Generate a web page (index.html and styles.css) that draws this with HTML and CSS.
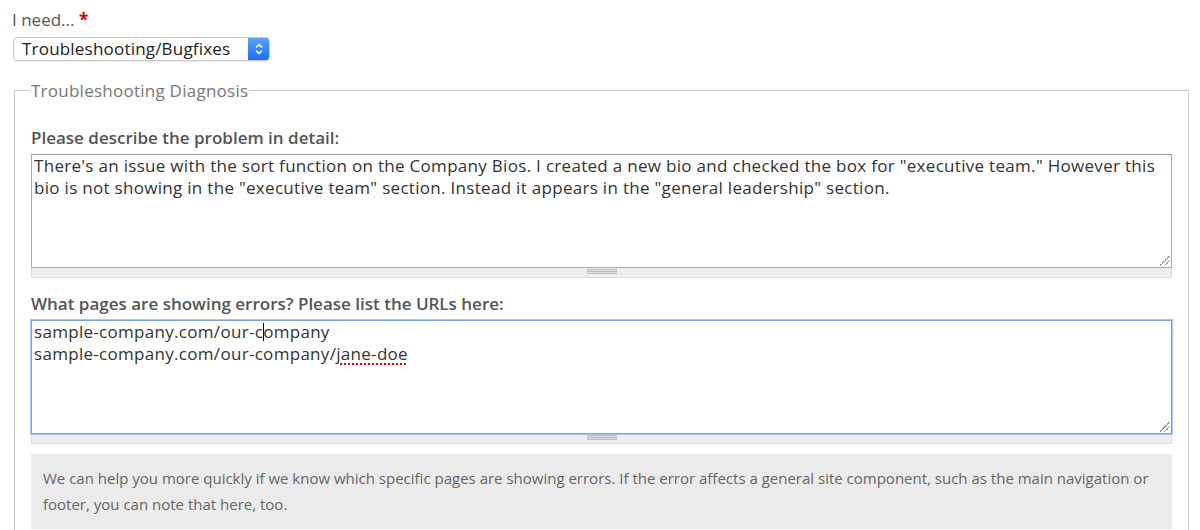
FILE: index.html
```
<!DOCTYPE html>
<html lang="en">
<head>
    <meta charset="UTF-8">
    <title>Support Request</title>
    <link rel="stylesheet" href="styles.css">
</head>
<body>
    <div class="form-item">
        <label class="field-label">I need... <span class="required">*</span></label>
        <div class="select">
            <span class="select-value">Troubleshooting/Bugfixes</span>
            <span class="select-arrow">
                <svg width="10" height="14" viewBox="0 0 10 14">
                    <path d="M2 5.5 L5 2.5 L8 5.5 M2 8.5 L5 11.5 L8 8.5" fill="none" stroke="#fff" stroke-width="1.5"/>
                </svg>
            </span>
        </div>
    </div>

    <fieldset class="group">
        <legend>Troubleshooting Diagnosis</legend>

        <div class="form-item">
            <label class="field-label bold">Please describe the problem in detail:</label>
            <div class="textarea">There's an issue with the sort function on the Company Bios. I created a new bio and checked the box for "executive team." However this<br>bio is not showing in the "executive team" section. Instead it appears in the "general leadership" section.<span class="resize"></span></div>
            <div class="grippie"><span></span></div>
        </div>

        <div class="form-item">
            <label class="field-label bold">What pages are showing errors? Please list the URLs here:</label>
            <div class="textarea focus">sample-company.com/our-c<span class="caret"></span>ompany<br>sample-company.com/our-company/<span class="misspelled">jane-doe</span><span class="resize"></span></div>
            <div class="grippie"><span></span></div>
            <div class="description">We can help you more quickly if we know which specific pages are showing errors. If the error affects a general site component, such as the main navigation or footer, you can note that here, too.</div>
        </div>
    </fieldset>
</body>
</html>
```

FILE: styles.css
```
body {
    margin: 0;
    padding: 10px 0 0 12px;
    font-family: "Open Sans", Arial, sans-serif;
    color: #555;
    background: #fff;
}

.field-label {
    display: block;
    font-size: 17px;
    line-height: 20px;
    color: #555;
}

.field-label.bold {
    font-weight: 600;
    margin-bottom: 6px;
}

.required {
    color: #c00;
    font-weight: bold;
}

.select {
    display: flex;
    align-items: stretch;
    width: 255px;
    height: 22px;
    margin: 7px 0 0 1px;
    border: 1px solid #c8c8c8;
    border-radius: 4px;
    box-shadow: 0 1px 1px rgba(0, 0, 0, 0.08);
    overflow: hidden;
}

.select-value {
    flex: 1;
    padding-left: 8px;
    font-size: 17px;
    letter-spacing: 0.2px;
    line-height: 22px;
    color: #222;
}

.select-arrow {
    width: 21px;
    display: flex;
    align-items: center;
    justify-content: center;
    background: linear-gradient(#5aa2fb, #1a72f0);
}

.group {
    margin: 18px 11px 0 2px;
    padding: 26px 16px 0 16px;
    border: 1px solid #ccc;
    border-bottom: none;
}

.group legend {
    padding: 0 1px;
    margin-left: -1px;
    font-size: 17px;
    letter-spacing: 0.25px;
    color: #777;
}

.group .form-item {
    margin-bottom: 16px;
}

.textarea {
    position: relative;
    height: 112px;
    padding: 0 2px;
    border: 1px solid #a9a9a9;
    border-top-color: #999;
    font-size: 17px;
    letter-spacing: 0.3px;
    line-height: 22px;
    color: #333;
    background: #fff;
}

.textarea.focus {
    border-color: #7fa2d6;
    box-shadow: 0 0 0 1px #a6c8f7;
}

.resize {
    position: absolute;
    right: 1px;
    bottom: 1px;
    width: 10px;
    height: 10px;
    background: linear-gradient(135deg, transparent 45%, #999 45%, #999 52%, transparent 52%, transparent 68%, #999 68%, #999 75%, transparent 75%);
}

.caret {
    display: inline-block;
    width: 1px;
    height: 18px;
    margin-right: -1px;
    vertical-align: -3px;
    background: #000;
}

.misspelled {
    text-decoration: underline dotted #e00;
    text-decoration-thickness: 2px;
    text-underline-offset: 3px;
}

.grippie {
    height: 9px;
    display: flex;
    justify-content: center;
    align-items: flex-start;
    background: #eee;
    border: 1px solid #ddd;
    border-top: none;
}

.grippie span {
    width: 30px;
    height: 5px;
    margin-top: 1px;
    background: repeating-linear-gradient(#bbb 0, #bbb 1px, #e0e0e0 1px, #e0e0e0 2px);
}

.description {
    margin-top: 10px;
    padding: 11px 12px 12px 12px;
    font-size: 15px;
    line-height: 26px;
    color: #666;
    background: #ebebeb;
}
```
